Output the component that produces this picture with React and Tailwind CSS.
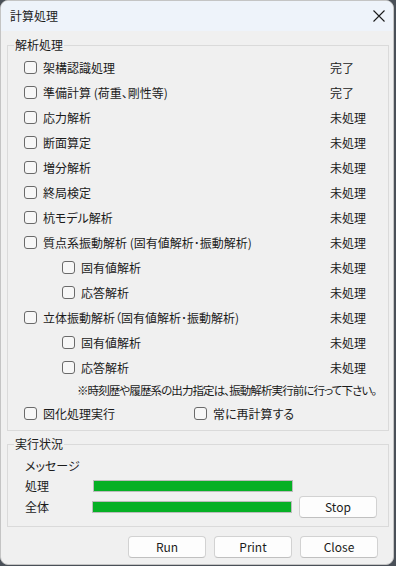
import React from 'react';

const FONT = "font-['Noto_Sans_CJK_JP','Noto_Sans',sans-serif] [font-feature-settings:'palt']";

const rows = [
  { label: '架構認識処理', status: '完了' },
  { label: '準備計算 (荷重、剛性等)', status: '完了' },
  { label: '応力解析', status: '未処理' },
  { label: '断面算定', status: '未処理' },
  { label: '増分解析', status: '未処理' },
  { label: '終局検定', status: '未処理' },
  { label: '杭モデル解析', status: '未処理' },
  { label: '質点系振動解析 (固有値解析･振動解析)', status: '未処理' },
  { label: '固有値解析', status: '未処理', sub: true },
  { label: '応答解析', status: '未処理', sub: true },
  { label: '立体振動解析（固有値解析･振動解析)', status: '未処理' },
  { label: '固有値解析', status: '未処理', sub: true },
  { label: '応答解析', status: '未処理', sub: true },
];

const Box = () => (
  <span className="w-[13px] h-[13px] shrink-0 rounded-[3px] border border-[#6a6a6a] bg-[#f7f7f7]"></span>
);

const Btn = ({ children }) => (
  <button className="w-[78px] h-[22px] rounded-[4px] border border-[#d2d2d2] border-b-[#c0c0c0] bg-[#fdfdfd] text-[12px] text-[#1b1b1b] leading-none">
    {children}
  </button>
);

const Bar = () => (
  <div className="w-[200px] h-[12px] border border-[#bcbcbc] bg-[#e6e6e6]">
    <div className="h-full w-full bg-[#06b025]"></div>
  </div>
);

export default function App() {
  return (
    <div className={`w-[396px] h-[566px] bg-[#4a5058] ${FONT} text-[12px] text-[#1b1b1b]`}>
      <div className="w-[394px] h-[565px] rounded-lg border border-[#c4c4c4] bg-[#f0f0f0] overflow-hidden flex flex-col">
        {/* title bar */}
        <div className="h-[30px] shrink-0 bg-[#eef3fa] flex items-center justify-between pl-[9px] pr-[7px]">
          <span className="text-[12px] -mt-[1px]">計算処理</span>
          <svg width="12" height="12" viewBox="0 0 12 12" className="mr-[1px] -mt-[1px]">
            <path d="M0.5 0.5 L11.5 11.5 M11.5 0.5 L0.5 11.5" stroke="#1b1b1b" strokeWidth="1.1" />
          </svg>
        </div>

        <div className="pl-[6px] pr-[4px] flex flex-col">
          {/* 解析処理 */}
          <fieldset className="mt-[6px] min-w-0 w-[382px] border border-[#dadada]">
            <legend className="ml-[6px] px-[1px] leading-[16px]">解析処理</legend>
            <div className="pt-[2px] flex flex-col">
              {rows.map((r, i) => (
                <div key={i} className="h-[25px] flex items-center">
                  <div className={`flex-1 min-w-0 flex items-center gap-[6px] ${r.sub ? 'pl-[54px]' : 'pl-[16px]'}`}>
                    <Box />
                    <span className="whitespace-nowrap">{r.label}</span>
                  </div>
                  <span className="w-[58px] shrink-0">{r.status}</span>
                </div>
              ))}
              <div className="h-[21px] flex items-center pl-[69px] whitespace-nowrap text-[11.5px] tracking-[-0.9px]">
                ※時刻歴や履歴系の出力指定は、振動解析実行前に行って下さい。
              </div>
              <div className="h-[25px] flex items-center pl-[16px]">
                <div className="w-[170px] flex items-center gap-[6px]">
                  <Box />
                  <span>図化処理実行</span>
                </div>
                <div className="flex items-center gap-[6px]">
                  <Box />
                  <span>常に再計算する</span>
                </div>
              </div>
              <div className="h-[4px]"></div>
            </div>
          </fieldset>

          {/* 実行状況 */}
          <fieldset className="mt-[5px] min-w-0 w-[382px] border border-[#dadada]">
            <legend className="ml-[6px] px-[1px] leading-[16px]">実行状況</legend>
            <div className="pt-[4px] pb-[8px] pl-[17px] pr-[11px] flex flex-col">
              <div className="h-[20px] flex items-center">メッセージ</div>
              <div className="h-[20px] flex items-center">
                <span className="w-[68px]">処理</span>
                <Bar />
              </div>
              <div className="h-[22px] flex items-center">
                <span className="w-[67px]">全体</span>
                <Bar />
                <div className="ml-auto">
                  <Btn>Stop</Btn>
                </div>
              </div>
            </div>
          </fieldset>

          <div className="mt-[9px] pr-[11px] flex justify-end gap-[8px]">
            <Btn>Run</Btn>
            <Btn>Print</Btn>
            <Btn>Close</Btn>
          </div>
        </div>
      </div>
    </div>
  );
}
